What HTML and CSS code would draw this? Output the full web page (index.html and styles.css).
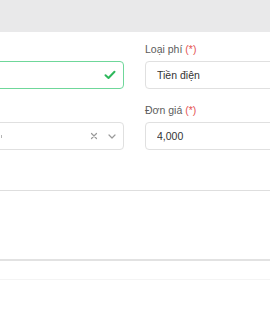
FILE: index.html
```html
<!DOCTYPE html>
<html lang="vi">
<head>
  <meta charset="UTF-8" />
  <meta name="viewport" content="width=device-width, initial-scale=1.0" />
  <title>Thêm phí</title>
  <link rel="stylesheet" href="styles.css">
</head>
<body>

  <div class="topbar"></div>

  <div class="modal-body">
    <div class="form-grid">
      <div class="form-group">
        <label>&nbsp;</label>
        <div class="input is-valid">
          <span class="value"></span>
          <svg class="check" width="12" height="10" viewBox="0 0 12 10">
            <path d="M1.5 5.2 L4.5 8 L10.5 1.8" fill="none" stroke="#2eb85c" stroke-width="2" stroke-linecap="round" stroke-linejoin="round"/>
          </svg>
        </div>
      </div>

      <div class="form-group">
        <label>Loại phí <span class="req">(*)</span></label>
        <div class="input"><span class="value">Tiền điện</span></div>
      </div>

      <div class="form-group">
        <label>&nbsp;</label>
        <div class="input select">
          <span class="value"><span class="tail"></span></span>
          <span class="select-icons">
            <svg width="8" height="8" viewBox="0 0 8 8">
              <path d="M1.5 1.5 L6.5 6.5 M6.5 1.5 L1.5 6.5" stroke="#9a9a9a" stroke-width="1.2" stroke-linecap="round"/>
            </svg>
            <svg width="8" height="5" viewBox="0 0 8 5">
              <path d="M1 1 L4 4 L7 1" fill="none" stroke="#9a9a9a" stroke-width="1.2" stroke-linecap="round" stroke-linejoin="round"/>
            </svg>
          </span>
        </div>
      </div>

      <div class="form-group">
        <label>Đơn giá <span class="req">(*)</span></label>
        <div class="input"><span class="value">4,000</span></div>
      </div>
    </div>
  </div>

  <div class="modal-footer"></div>
  <div class="footer-bottom"></div>

</body>
</html>
```

FILE: styles.css
```css
body {
  margin: 0;
  width: 270px;
  overflow: hidden;
  font-family: "Liberation Sans", Arial, sans-serif;
  background-color: #ffffff;
}

.topbar {
  height: 32px;
  background-color: #e9e9ea;
}

.modal-body {
  padding-top: 8px;
  padding-bottom: 40px;
  border-bottom: 1px solid #dedede;
}

.form-grid {
  display: grid;
  grid-template-columns: 224px 224px;
  column-gap: 21px;
  row-gap: 12px;
  margin-left: -100px;
}

.form-group label {
  display: block;
  font-size: 10.5px;
  line-height: 18px;
  color: #5c5c5c;
  margin-bottom: 3px;
}

.req {
  color: #e55353;
}

.input {
  box-sizing: border-box;
  height: 28px;
  display: flex;
  align-items: center;
  padding: 0 7px 0 11px;
  border: 1px solid #e0e0e0;
  border-radius: 4px;
  font-size: 10.5px;
  color: #333333;
}

.input .value {
  flex: 1;
  white-space: nowrap;
  overflow: hidden;
}

.input.is-valid {
  border-color: #6fd79a;
}

/* a sliver of the cut-off selected text */
.tail {
  display: block;
  width: 90px;
  height: 3px;
  border-right: 1px solid #b5b5b5;
  box-sizing: border-box;
}

.select-icons {
  display: flex;
  align-items: center;
  gap: 10px;
  margin-left: 8px;
}

.modal-footer {
  height: 68px;
  border-bottom: 2px solid #e2e2e2;
}

.footer-bottom {
  height: 18px;
  border-bottom: 1px solid #f4f4f4;
}
```
